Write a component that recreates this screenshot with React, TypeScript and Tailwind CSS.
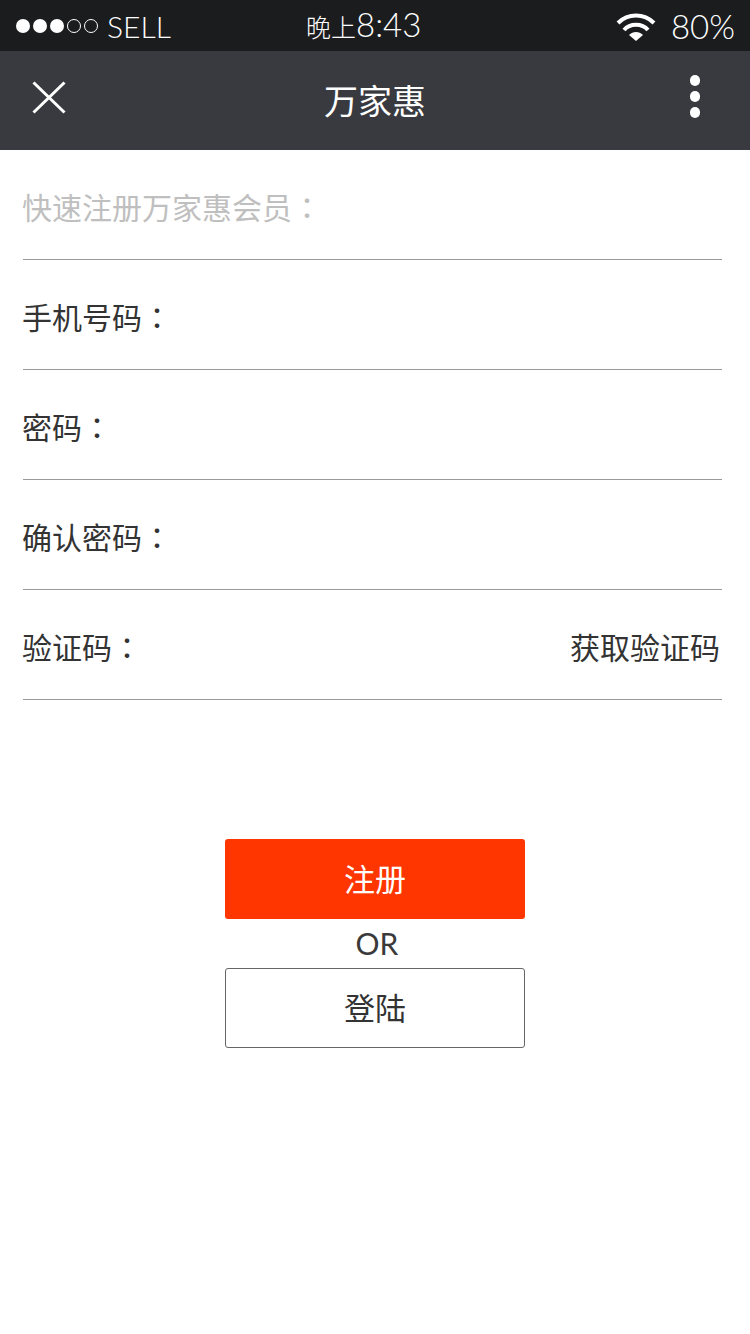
function Colon() {
  return <span className="font-['Noto_Sans_CJK_TC',sans-serif]">：</span>;
}

export default function App() {
  const rows = ["手机号码", "密码", "确认密码"];
  return (
    <div className="w-[750px] h-[1334px] bg-white flex flex-col font-['Lato','Noto_Sans_CJK_SC',sans-serif] font-normal text-[#333333]">
      <div className="h-[51px] bg-[#1b1c1e] flex items-center relative text-white shrink-0">
        <div className="flex items-center gap-[3px] pl-[16px] w-[300px]">
          {[0, 1, 2].map((i) => (
            <span key={i} className="w-[14px] h-[14px] rounded-full bg-white" />
          ))}
          {[0, 1].map((i) => (
            <span key={i} className="w-[14px] h-[14px] rounded-full border border-white" />
          ))}
          <span className="ml-[6px] text-[30px] leading-[40px] mt-[1px] font-light">SELL</span>
        </div>
        <div className="flex-1 flex items-baseline">
          <span className="ml-[6px] text-[25px] leading-[40px] font-light">晚上</span>
          <span className="text-[33px] leading-[40px] font-light">8:43</span>
        </div>
        <svg width="40" height="30" viewBox="0 0 40 30" className="mr-[15px] mt-[2px]" fill="none" stroke="white" strokeWidth="4">
          <path d="M2 11 C12 1 28 1 38 11" />
          <path d="M8 18 C14 11 26 11 32 18" />
          <path d="M13 23 L20 29 L27 23 C23 19 17 19 13 23 Z" fill="white" stroke="none" />
        </svg>
        <span className="pr-[15px] text-[33px] leading-[40px] font-light">80%</span>
      </div>
      <div className="h-[99px] bg-[#393a3f] flex items-center justify-between relative shrink-0 text-white">
        <svg width="34" height="33" viewBox="0 0 34 33" className="ml-[32px] mb-[7px]" stroke="white" strokeWidth="3">
          <path d="M1.5 1.5 L32.5 31.5 M32.5 1.5 L1.5 31.5" />
        </svg>
        <span className="mr-[6px] text-[34px] leading-[44px]">万家惠</span>
        <div className="mr-[50px] mb-[8px] flex flex-col gap-[5px]">
          <span className="w-[10px] h-[11px] rounded-full bg-white" />
          <span className="w-[10px] h-[11px] rounded-full bg-white" />
          <span className="w-[10px] h-[11px] rounded-full bg-white" />
        </div>
      </div>
      <div className="flex flex-col pl-[23px] pr-[28px]">
        <div className="h-[110px] border-b border-[#999999] flex items-center pt-[5px] text-[30px] text-[#bfbfbf]">
          <span className="-ml-[1px]">快速注册万家惠会员<Colon /></span>
        </div>
        {rows.map((r) => (
          <div key={r} className="h-[110px] border-b border-[#999999] flex items-center pt-[5px] text-[30px]">
            <span className="-ml-[1px]">{r}<Colon /></span>
          </div>
        ))}
        <div className="h-[110px] border-b border-[#999999] flex items-center justify-between pt-[5px] text-[30px] pr-[2px]">
          <span className="-ml-[1px]">验证码<Colon /></span>
          <span>获取验证码</span>
        </div>
      </div>
      <div className="mt-[139px] flex flex-col items-center">
        <div className="w-[300px] h-[80px] rounded-[3px] bg-[#ff3600] text-white text-[31px] flex items-center justify-center">注册</div>
        <div className="h-[49px] flex items-center pl-[4px] text-[30px] text-[#3a3a3a]">OR</div>
        <div className="w-[300px] h-[80px] rounded-[3px] border border-[#666666] text-[31px] flex items-center justify-center">登陆</div>
      </div>
    </div>
  );
}
